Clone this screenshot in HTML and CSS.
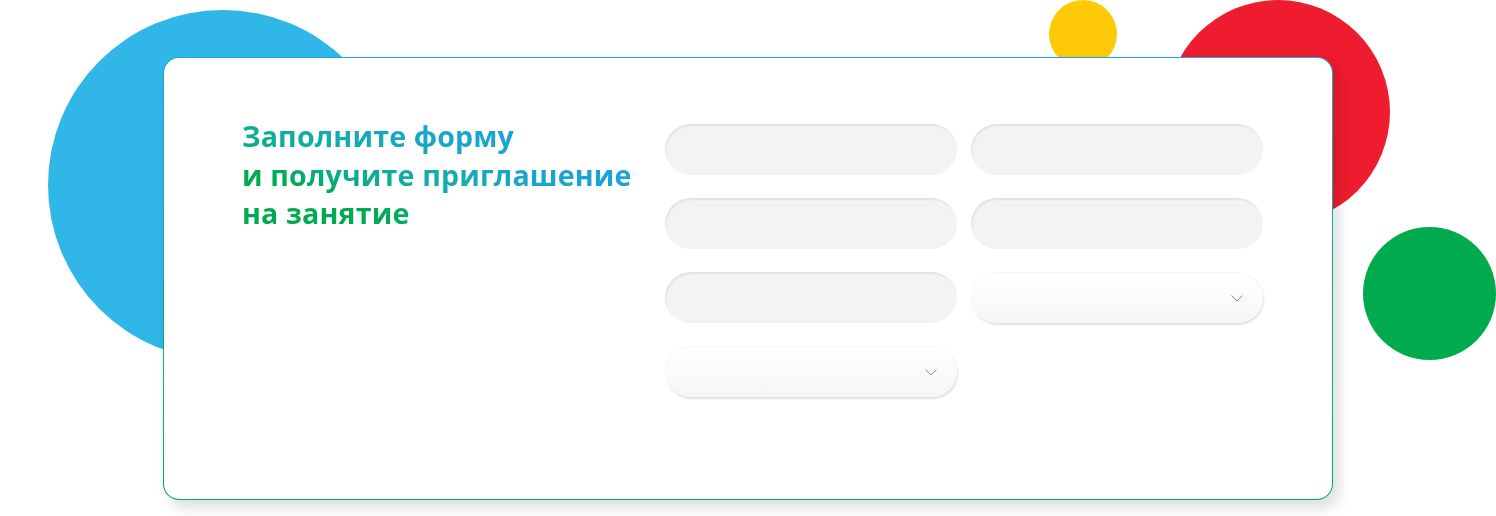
FILE: index.html
```html
<!DOCTYPE html>
<html lang="ru">
<head>
<meta charset="utf-8">
<title>Форма</title>
<link rel="stylesheet" href="styles.css">
</head>
<body>
<div class="stage">
  <span class="dot dot-blue"></span>
  <span class="dot dot-yellow"></span>
  <span class="dot dot-red"></span>
  <span class="dot dot-green"></span>
  <section class="card">
    <h2 class="title">Заполните форму<br>и получите приглашение<br>на занятие</h2>
    <form class="form">
      <div class="field"></div>
      <div class="field"></div>
      <div class="field"></div>
      <div class="field"></div>
      <div class="field"></div>
      <div class="select"><svg class="chev" width="12" height="7" viewBox="0 0 12 7"><path d="M0.5 0.5 L6 6 L11.5 0.5" fill="none" stroke="#8a8a8a" stroke-width="1"/></svg></div>
      <div class="select"><svg class="chev" width="12" height="7" viewBox="0 0 12 7"><path d="M0.5 0.5 L6 6 L11.5 0.5" fill="none" stroke="#8a8a8a" stroke-width="1"/></svg></div>
    </form>
  </section>
</div>
</body>
</html>
```
FILE: styles.css
```css
* { box-sizing: border-box; }
html, body { margin: 0; padding: 0; background: #fff; }
.stage {
  position: relative;
  width: 1496px;
  height: 516px;
  overflow: hidden;
  padding: 57px 0 0 163px;
}
.dot { position: absolute; border-radius: 50%; display: block; }
.dot-blue { left: 48px; top: 10px; width: 350px; height: 350px; background: #31b6e8; }
.dot-yellow { left: 1049px; top: 0px; width: 68px; height: 68px; background: #ffc907; }
.dot-red { left: 1166px; top: 0px; width: 224px; height: 224px; background: #ee1c2e; }
.dot-green { left: 1363px; top: 227px; width: 133px; height: 133px; background: #00ab4e; }
.card {
  position: relative;
  width: 1170px;
  height: 443px;
  border: 1px solid transparent;
  border-radius: 16px;
  background:
    linear-gradient(#fff, #fff) padding-box,
    linear-gradient(to bottom, #1aa8dc 0%, #00b050 100%) border-box;
  box-shadow: 6px 8px 14px rgba(0,0,0,0.13);
  display: flex;
  padding: 59px 0 0 78px;
}
.title {
  margin: 0;
  width: 390px;
  height: 116px;
  font-family: "Open Sans", "Noto Sans", sans-serif;
  font-weight: 700;
  font-size: 28.6px;
  line-height: 38.5px;
  letter-spacing: 0.15px;
  white-space: nowrap;
  background: linear-gradient(20deg, #00aa4e 0%, #00aa52 26%, #0bae8c 37%, #13acae 50%, #1aa4d2 68%, #1a9fd9 100%);
  -webkit-background-clip: text;
  background-clip: text;
  color: transparent;
  align-self: flex-start;
  flex: none;
  margin-right: 33px;
}
.form {
  display: grid;
  grid-template-columns: 292px 292px;
  grid-auto-rows: 51px;
  column-gap: 14px;
  row-gap: 23px;
  margin-top: 7px;
}
.field {
  border-radius: 26px;
  background: #f3f3f3;
  box-shadow: inset 1px 2px 2px rgba(0,0,0,0.07);
}
.select {
  position: relative;
  border-radius: 26px;
  background: linear-gradient(to bottom, #ffffff 0%, #f6f6f6 100%);
  box-shadow: inset 0 1px 1px rgba(0,0,0,0.04), 1px 2px 2px rgba(0,0,0,0.12);
  display: flex;
  align-items: center;
  justify-content: flex-end;
  padding-right: 20px;
}
.chev { display: block; margin-top: 2px; }
```
